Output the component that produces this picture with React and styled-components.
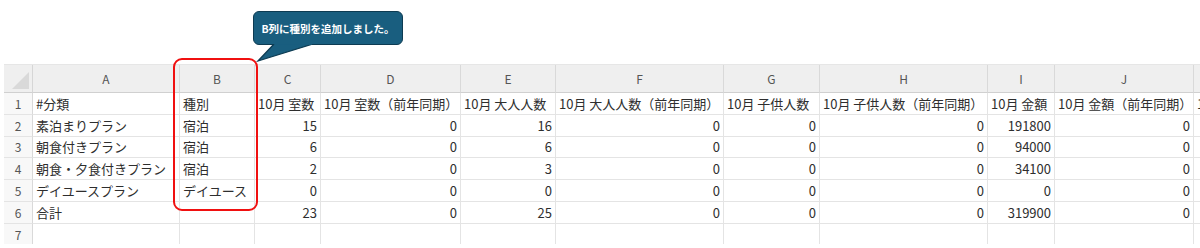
import React from 'react'
import styled, {createGlobalStyle} from 'styled-components'

const GlobalStyle = createGlobalStyle`
html, body {
    margin: 0;
    padding: 0;
    background: #fff;
}
body {
    font-family: "Noto Sans CJK JP", "Noto Sans", sans-serif;
}
`

const columns = ['A', 'B', 'C', 'D', 'E', 'F', 'G', 'H', 'I', 'J', '']

const rows = [
    ['#分類', '種別', '10月 室数', '10月 室数（前年同期）', '10月 大人人数', '10月 大人人数（前年同期）', '10月 子供人数', '10月 子供人数（前年同期）', '10月 金額', '10月 金額（前年同期）', '10月 客単価'],
    ['素泊まりプラン', '宿泊', 15, 0, 16, 0, 0, 0, 191800, 0, ''],
    ['朝食付きプラン', '宿泊', 6, 0, 6, 0, 0, 0, 94000, 0, ''],
    ['朝食・夕食付きプラン', '宿泊', 2, 0, 3, 0, 0, 0, 34100, 0, ''],
    ['デイユースプラン', 'デイユース', 0, 0, 0, 0, 0, 0, 0, 0, ''],
    ['合計', '', 23, 0, 25, 0, 0, 0, 319900, 0, ''],
    ['', '', '', '', '', '', '', '', '', '', ''],
]

function App() {
    return (
        <Page>
            <GlobalStyle />
            <Sheet>
                <Grid>
                    <Corner><CornerMark /></Corner>
                    {columns.map((c, i) => (
                        <ColHead key={i}>{c}</ColHead>
                    ))}
                    {rows.map((row, r) => (
                        <React.Fragment key={r}>
                            <RowHead>{r + 1}</RowHead>
                            {row.map((v, i) => (
                                <Cell key={i} $num={typeof v === 'number'}>{v}</Cell>
                            ))}
                        </React.Fragment>
                    ))}
                </Grid>
            </Sheet>
            <Highlight />
            <Callout>
                <Bubble>B列に種別を追加しました。</Bubble>
                <Tail width="60" height="20" viewBox="0 0 60 20">
                    <path d="M20,0 L4,17 L59,0" fill="#195e7f" stroke="#0d3b52" strokeWidth="1.3" />
                    <path d="M21,0 H58" stroke="#195e7f" strokeWidth="1.6" />
                </Tail>
            </Callout>
        </Page>
    )
}

export default App

const Page = styled.div`
position: relative;
width: 1200px;
height: 248px;
overflow: hidden;
background: #fff;
padding: 64px 0 0 4px;
box-sizing: border-box;
`

const Sheet = styled.div`
height: 179px;
overflow: hidden;
border-top: 1px solid #e6e6e6;
`

const Grid = styled.div`
display: grid;
grid-template-columns: 29px 147px 75px 66px 140px 95px 168px 96px 168px 67px 139px 120px;
grid-template-rows: 28px;
grid-auto-rows: 21.8px;
width: max-content;
`

const Corner = styled.div`
display: flex;
align-items: flex-end;
justify-content: flex-end;
padding: 3px;
background: #efefef;
border-right: 1px solid #d6d6d6;
border-bottom: 1px solid #d0d0d0;
`

const CornerMark = styled.span`
width: 17px;
height: 17px;
background: #d9d9d9;
clip-path: polygon(100% 0, 100% 100%, 0 100%);
`

const ColHead = styled.div`
display: flex;
align-items: center;
justify-content: center;
background: #efefef;
border-right: 1px solid #d9d9d9;
border-bottom: 1px solid #d0d0d0;
font-size: 12px;
color: #555;
`

const RowHead = styled.div`
display: flex;
align-items: center;
justify-content: center;
background: #f8f8f8;
border-right: 1px solid #d9d9d9;
border-bottom: 1px solid #e4e4e4;
font-size: 12px;
color: #555;
`

const Cell = styled.div`
display: flex;
align-items: center;
justify-content: ${props => props.$num ? 'flex-end' : 'flex-start'};
padding: 0 3px;
border-right: 1px solid #e4e4e4;
border-bottom: 1px solid #e4e4e4;
font-size: 13px;
color: #2e2e2e;
white-space: nowrap;
overflow: hidden;
`

const Highlight = styled.div`
position: absolute;
left: 173px;
top: 58px;
width: 85px;
height: 153px;
box-sizing: border-box;
border: 2.5px solid #f01010;
border-radius: 9px;
`

const Callout = styled.div`
position: absolute;
left: 253px;
top: 11px;
width: 150px;
`

const Bubble = styled.div`
height: 34px;
box-sizing: border-box;
display: flex;
align-items: center;
justify-content: center;
background: #195e7f;
border: 1.3px solid #0d3b52;
border-radius: 6px;
color: #fff;
font-size: 10.5px;
font-weight: 700;
`

const Tail = styled.svg`
position: absolute;
left: 1px;
top: 33px;
display: block;
`
